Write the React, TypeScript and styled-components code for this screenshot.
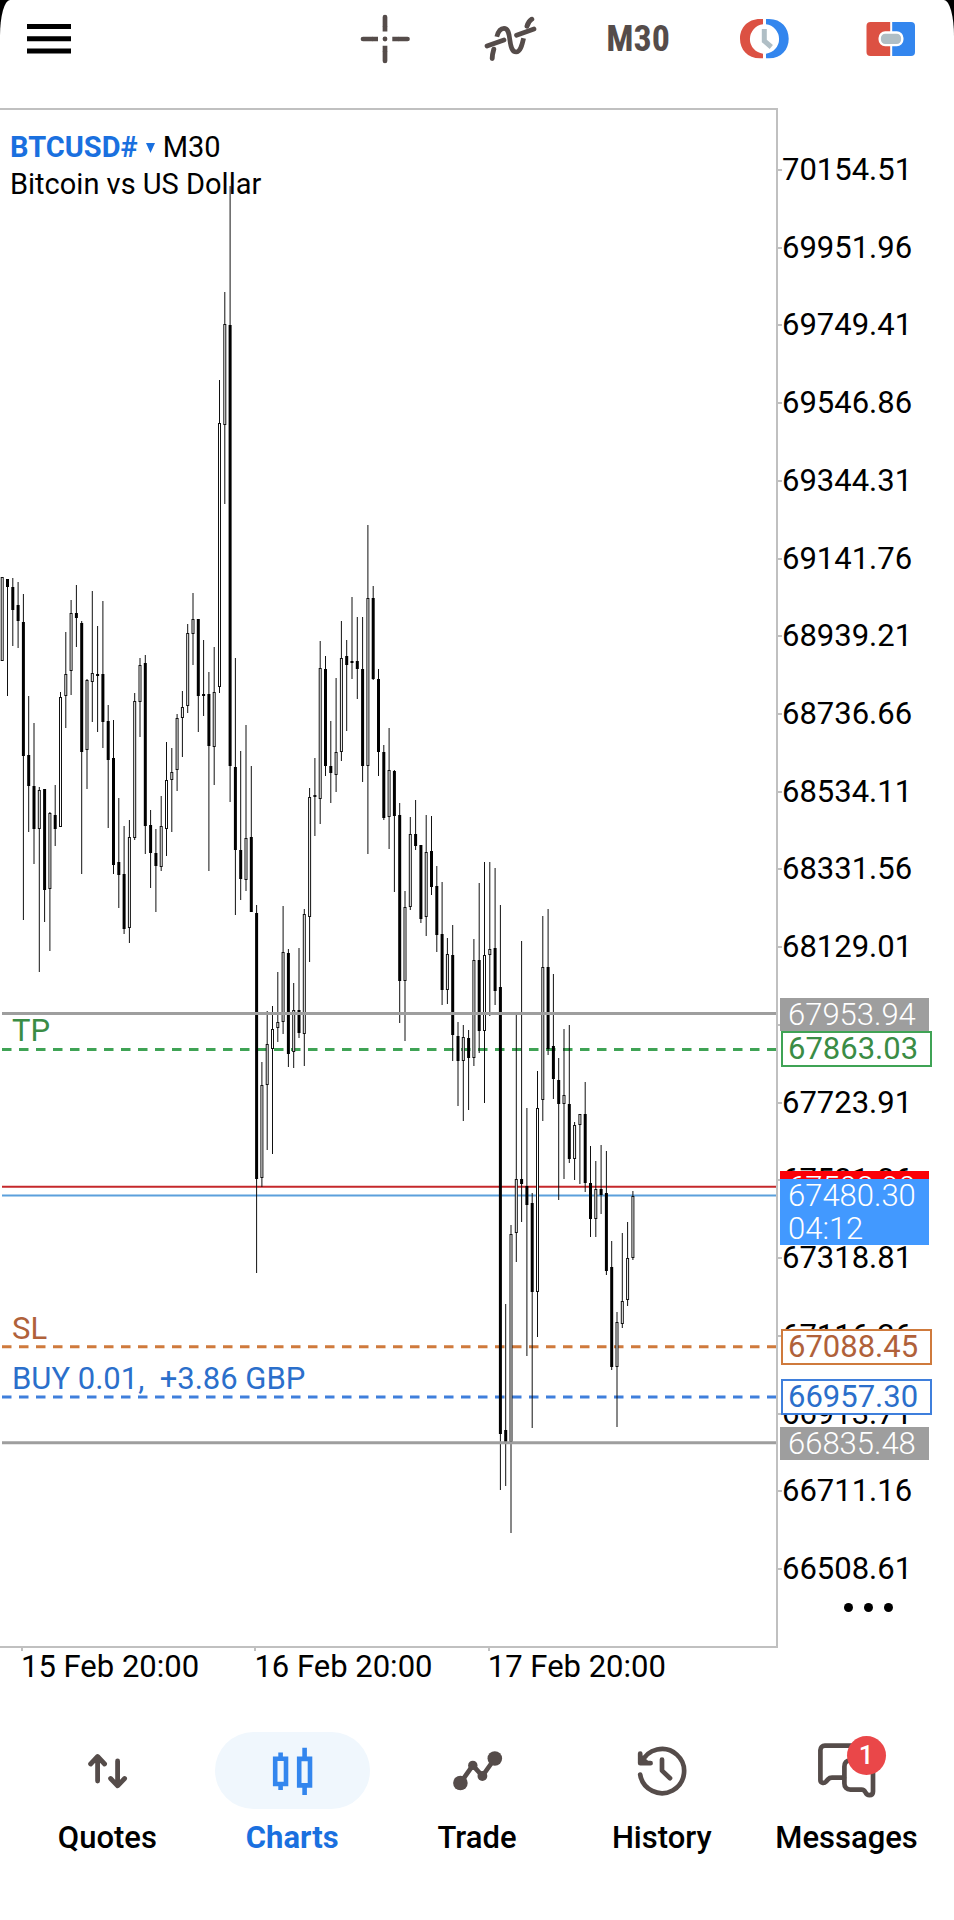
import React from 'react';
import styled, { createGlobalStyle, css } from 'styled-components';

const ink = '#000000';
const iconInk = '#554c4a';
const blue = '#1a70df';
const frame = '#c0c0c0';

/* ---------- price scale ---------- */

const TOP_PRICE = 70154.51;
const PRICE_STEP = 202.55;
const STEP_PX = 77.74;
const FIRST_TICK = 59;
const PLOT_W = 776;
const PLOT_H = 1536;
const TICKS = 19;

const yOf = (price: number) => FIRST_TICK + ((TOP_PRICE - price) / PRICE_STEP) * STEP_PX;
const pctOf = (price: number) => (yOf(price) / PLOT_H) * 100;

const ticks = Array.from({ length: TICKS }, (_, i) => (TOP_PRICE - i * PRICE_STEP).toFixed(2));

/* high, body top, body bottom, low, and whether the candle closed lower */
type Candle = [number, number, number, number, 0 | 1];

const candles: Candle[] = [
  [577, 577, 661, 661, 0], [579, 579, 587, 696, 1], [578, 587, 610, 646, 1], [582, 605, 621, 648, 1],
  [594, 622, 756, 920, 1], [696, 755, 786, 832, 1], [723, 786, 829, 864, 1], [787, 790, 829, 972, 0],
  [789, 789, 890, 922, 1], [812, 813, 889, 951, 0], [785, 815, 829, 846, 1], [692, 697, 827, 827, 0],
  [632, 674, 696, 728, 0], [600, 613, 671, 695, 0], [585, 613, 618, 647, 1], [621, 623, 752, 874, 1],
  [679, 680, 750, 789, 0], [591, 673, 682, 722, 0], [626, 674, 676, 732, 1], [601, 674, 722, 748, 1],
  [705, 721, 760, 828, 1], [720, 758, 865, 874, 1], [798, 862, 875, 908, 1], [826, 874, 929, 934, 1],
  [820, 837, 928, 943, 0], [693, 701, 838, 840, 0], [658, 665, 702, 737, 0], [655, 663, 826, 854, 1],
  [810, 825, 853, 888, 1], [829, 853, 866, 912, 1], [796, 826, 867, 871, 0], [742, 780, 829, 856, 0],
  [748, 772, 780, 832, 0], [714, 718, 770, 791, 0], [691, 707, 718, 757, 0], [624, 633, 706, 713, 0],
  [593, 619, 634, 665, 0], [619, 619, 696, 732, 1], [640, 694, 696, 716, 1], [672, 694, 746, 871, 1],
  [647, 692, 747, 785, 0], [380, 423, 687, 693, 0], [292, 324, 425, 504, 0], [186, 325, 766, 802, 1],
  [658, 767, 850, 915, 1], [751, 850, 879, 900, 1], [725, 838, 880, 891, 0], [766, 837, 912, 912, 1],
  [905, 913, 1179, 1273, 1], [1062, 1085, 1178, 1187, 0], [1011, 1044, 1085, 1150, 0], [1006, 1029, 1049, 1154, 0],
  [972, 1022, 1028, 1042, 0], [906, 952, 1022, 1034, 0], [949, 953, 1054, 1067, 1], [983, 1010, 1052, 1068, 0],
  [948, 1010, 1033, 1038, 1], [909, 914, 1034, 1066, 0], [788, 797, 917, 962, 0], [758, 795, 797, 836, 0],
  [641, 668, 799, 824, 0], [656, 669, 766, 776, 1], [721, 766, 773, 803, 1], [678, 752, 775, 792, 0],
  [621, 658, 752, 761, 0], [640, 656, 665, 731, 1], [597, 661, 663, 679, 1], [617, 661, 669, 699, 1],
  [617, 669, 766, 782, 1], [525, 598, 766, 854, 0], [586, 598, 679, 680, 1], [669, 679, 752, 776, 1],
  [745, 752, 818, 820, 1], [728, 770, 817, 849, 0], [770, 771, 816, 892, 1], [803, 815, 981, 1023, 1],
  [891, 907, 981, 1041, 0], [817, 834, 907, 910, 0], [800, 834, 846, 850, 1], [845, 845, 919, 923, 1],
  [815, 852, 917, 936, 0], [816, 851, 887, 895, 1], [866, 886, 935, 952, 1], [882, 934, 990, 1005, 1],
  [938, 954, 990, 1004, 0], [925, 955, 1035, 1061, 1], [1022, 1036, 1061, 1106, 1], [1025, 1037, 1061, 1121, 0],
  [1030, 1038, 1058, 1110, 1], [939, 960, 1058, 1066, 0], [883, 960, 1031, 1053, 1], [862, 955, 1031, 1103, 0],
  [862, 949, 955, 1016, 0], [868, 948, 991, 1005, 1], [905, 987, 1434, 1490, 1], [1304, 1430, 1442, 1486, 1],
  [1225, 1234, 1442, 1533, 0], [1015, 1179, 1233, 1262, 0], [941, 1179, 1184, 1222, 1], [1108, 1186, 1205, 1356, 1],
  [1193, 1203, 1292, 1428, 1], [1071, 1108, 1292, 1337, 0], [916, 967, 1100, 1121, 0], [909, 967, 1049, 1055, 1],
  [974, 1046, 1079, 1099, 1], [1058, 1080, 1104, 1200, 1], [1029, 1095, 1104, 1179, 0], [1025, 1104, 1159, 1163, 1],
  [1122, 1125, 1159, 1180, 0], [1114, 1114, 1125, 1184, 0], [1082, 1114, 1183, 1192, 1], [1146, 1183, 1219, 1237, 1],
  [1161, 1189, 1219, 1237, 0], [1145, 1189, 1195, 1214, 1], [1151, 1193, 1271, 1275, 1], [1241, 1267, 1367, 1370, 1],
  [1312, 1322, 1367, 1427, 0], [1233, 1301, 1324, 1328, 0], [1222, 1258, 1300, 1306, 0], [1191, 1196, 1258, 1260, 0],
];

const CANDLE_STEP = 5.3;
const CANDLE_START = 2.2;

/* ---------- shell ---------- */

const GlobalStyle = createGlobalStyle`
  *, *::before, *::after { box-sizing: border-box; }
  body { margin: 0; background: #000000; font-family: Roboto, "Liberation Sans", sans-serif; color: ${ink}; }
  button { font: inherit; color: inherit; background: none; border: 0; padding: 0; cursor: pointer; }
  svg { display: block; }
`;

const Screen = styled.main`
  display: flex;
  flex-direction: column;
  min-height: 100vh;
  background: #ffffff;
  border-radius: 10px 10px 0 0 / 36px 36px 0 0;
  overflow: hidden;
`;

const Toolbar = styled.header`
  display: flex;
  justify-content: space-between;
  align-items: flex-start;
  height: 108px;
  padding: 0 1px 0 10px;
`;

const Tools = styled.div`
  display: flex;
`;

const ToolButton = styled.button<{ $narrow?: boolean }>`
  display: flex;
  align-items: center;
  justify-content: center;
  width: ${p => (p.$narrow ? 78 : 126)}px;
  height: 78px;
`;

const Timeframe = styled.span`
  font-family: "Liberation Sans Narrow", "Roboto Condensed", Roboto, sans-serif;
  font-size: 36px;
  line-height: 78px;
  font-weight: 700;
  color: ${iconInk};
`;

/* ---------- chart ---------- */

const Chart = styled.section`
  flex: 1;
  display: flex;
  min-height: 600px;
`;

const Plot = styled.div`
  position: relative;
  flex: 1;
  min-width: 0;
  border: 2px solid ${frame};
  border-left: 0;
`;

const Canvas = styled.svg`
  position: absolute;
  inset: 0;
  width: 100%;
  height: 100%;
`;

const Legend = styled.div`
  position: absolute;
  top: 19px;
  left: 10px;
  font-size: 29px;
  line-height: 37px;
`;

const SymbolRow = styled.div`
  display: flex;
  align-items: center;
  gap: 8px;
`;

const SymbolButton = styled.button`
  display: flex;
  align-items: center;
  gap: 8px;
  font-weight: 700;
  color: ${blue};
`;

const LevelLabel = styled.span<{ $price: number; $color: string }>`
  position: absolute;
  top: ${p => pctOf(p.$price)}%;
  left: 12px;
  margin-top: -35px;
  font-size: 31px;
  line-height: 36px;
  white-space: pre;
  color: ${p => p.$color};
`;

const Axis = styled.aside`
  position: relative;
  display: flex;
  flex-direction: column;
  width: 176px;
  padding: 21px 0 38px;
  border: 2px solid transparent;
  border-width: 2px 0;
`;

const TickLabel = styled.span`
  flex: 1;
  display: flex;
  align-items: center;
  font-size: 31px;
  line-height: 36px;

  &::before {
    content: '';
    width: 4px;
    height: 2px;
    background: ${frame};
  }
`;

const PriceTag = styled.span<{ $price: number; $color: string; $outlined?: boolean; $text?: string }>`
  position: absolute;
  top: ${p => pctOf(p.$price)}%;
  left: 2px;
  width: 149px;
  margin-top: -16px;
  padding-left: 8px;
  font-size: 31px;
  line-height: 33px;
  font-weight: 300;
  color: #ffffff;
  background: ${p => p.$color};

  ${p => p.$outlined && css`
    left: 3px;
    width: 151px;
    margin-top: -17px;
    padding-left: 5px;
    line-height: 32px;
    font-weight: 400;
    color: ${p.$text};
    background: #ffffff;
    border: 2px solid ${p.$color};
  `}
`;

const TagLine = styled.span`
  display: block;
`;

const MoreButton = styled.button`
  position: absolute;
  right: 51px;
  bottom: 24px;
  display: flex;
  gap: 11px;
  padding: 10px;
`;

const Dot = styled.span`
  width: 9px;
  height: 9px;
  border-radius: 50%;
  background: ${ink};
`;

const TimeAxis = styled.div`
  display: grid;
  grid-template-columns: repeat(3, 30%);
  height: 84px;
  margin-right: 176px;
  font-size: 31px;
  line-height: 37px;
`;

const TimeTick = styled.time`
  padding-left: 21px;
  white-space: nowrap;

  &::before {
    content: '';
    display: block;
    width: 2px;
    height: 3px;
    margin-bottom: -3px;
    background: ${frame};
  }
`;

/* ---------- bottom navigation ---------- */

const Nav = styled.nav`
  display: grid;
  grid-template-columns: repeat(5, 1fr);
  padding: 0 15px 64px;
`;

const NavItem = styled.a<{ $active?: boolean }>`
  display: flex;
  flex-direction: column;
  align-items: center;
  gap: 11px;
  font-size: 31px;
  line-height: 36px;
  font-weight: ${p => (p.$active ? 700 : 500)};
  color: ${p => (p.$active ? blue : ink)};
  text-decoration: none;
`;

const NavPill = styled.span<{ $active?: boolean }>`
  display: flex;
  justify-content: center;
  width: 155px;
  max-width: 100%;
  height: 77px;
  border-radius: 39px;
  background: ${p => (p.$active ? '#f0f7fd' : 'transparent')};
`;

const IconBox = styled.span`
  position: relative;
`;

const Badge = styled.span`
  position: absolute;
  top: 4px;
  left: 39px;
  width: 39px;
  height: 39px;
  border-radius: 50%;
  background: #ea4749;
  color: #ffffff;
  font-size: 26px;
  line-height: 39px;
  font-weight: 500;
  text-align: center;
`;

/* ---------- icons ---------- */

const Icon = ({ children }: { children: React.ReactNode }) => (
  <svg width="78" height="78" viewBox="0 0 78 78" fill="none" stroke={iconInk} strokeWidth="4.7"
    strokeLinecap="round" strokeLinejoin="round" aria-hidden="true">
    {children}
  </svg>
);

const MenuIcon = () => (
  <Icon>
    <path d="M17 26.5h44M17 38.8h44M17 51h44" stroke={ink} strokeWidth="5" strokeLinecap="butt" />
  </Icon>
);

const CrosshairIcon = () => (
  <Icon>
    <path d="M38 17v9M38 61v-9M16 39h9M60.5 39h-9" />
    <path d="M38 26v5.6M38 52v-6.3M25 39h6M51.5 39h-6.2" strokeLinecap="butt" />
    <circle cx="38" cy="39" r="2.4" fill={iconInk} stroke="none" />
  </Icon>
);

const IndicatorsIcon = () => (
  <Icon>
    <path d="M14 46L31 40M43.5 35.3L61 29" />
    <path d="M19.2 58.6C19.2 55 20 52 20.8 49.2M54 26.2C55 23 56.5 20.5 58.8 19.2" strokeWidth="4.9" />
    <path d="M23.8 36.8C25 32 27.5 28.4 31 28.4C35 28.4 36 33 36.8 39.5C37.8 47 39 52 43.2 52C47.5 52 49 45 50.6 38.2" strokeLinecap="butt" />
  </Icon>
);

const ClockIcon = () => (
  <Icon>
    <path d="M38 19H35C22.5 19 15 28 15 38.7S22.5 58.3 35 58.3H38V53.7A14.8 14.8 0 0 1 38 24.3Z" fill="#dc5143" stroke="none" />
    <path d="M41 19H44C56.5 19 63.7 28 63.7 38.7S56.5 58.3 44 58.3H41V53.7A14.8 14.8 0 0 0 41 24.3Z" fill="#3386ee" stroke="none" />
    <path d="M39.3 29V41L46.3 47" stroke="#b0bec5" strokeWidth="5" strokeLinecap="butt" strokeLinejoin="miter" />
  </Icon>
);

const OneClickIcon = () => (
  <Icon>
    <path d="M39.2 22H19.5A4 4 0 0 0 15.5 26V52A4 4 0 0 0 19.5 56H39.2Z" fill="#dc5143" stroke="none" />
    <path d="M41.2 22H60A4 4 0 0 1 64 26V52A4 4 0 0 1 60 56H41.2Z" fill="#3386ee" stroke="none" />
    <rect x="28.7" y="32.5" width="22.6" height="12.6" rx="5.5" fill="#b0bec5" stroke="#ffffff" strokeWidth="2.4" />
  </Icon>
);

const QuotesIcon = () => (
  <Icon>
    <path d="M29.6 25.5V49M22.6 32L29.6 24.5L36.6 32M49.6 29V52M42.6 46.5L49.6 53.8L56.6 46.5" strokeWidth="4.8" />
  </Icon>
);

const ChartsIcon = () => (
  <Icon>
    <path d="M22.2 26.7H33V52H22.2ZM27.6 20.5V26M27.6 53V58M46.2 26.9H57V53.4H46.2ZM51.6 15.7V26M51.6 54V63"
      stroke="#3386ee" strokeLinecap="butt" strokeLinejoin="miter" strokeWidth="4.6" />
  </Icon>
);

const TradeIcon = () => (
  <Icon>
    <path d="M22.4 51L34.8 33.4L44.4 44L56.8 26.5" />
    <g fill={iconInk} stroke="none">
      <circle cx="22.4" cy="51" r="7.3" />
      <circle cx="56.8" cy="26.5" r="7.3" />
      <circle cx="34.8" cy="33.4" r="4.7" />
      <circle cx="44.4" cy="44" r="4.9" />
    </g>
  </Icon>
);

const HistoryIcon = () => (
  <Icon>
    <path d="M17.2 42.6A22.1 22.1 0 1 0 18.6 30.6" />
    <path d="M17.2 21.6V31.2H27.6Z" fill={iconInk} stroke="none" />
    <path d="M17.2 21.6V31.2H27.6M39 27.6V38.6L47 46.2" />
  </Icon>
);

const MessagesIcon = () => (
  <Icon>
    <path d="M44 13.7H16.8A4.4 4.4 0 0 0 12.4 18.1V48C12.4 50.8 15.8 51.8 18 49.6L20 47.4C21.2 46.1 22.4 45.7 24 45.7H36" />
    <path d="M42 28.5C38.4 28.5 36.4 31 36.4 34.4V51.6C36.4 55.2 38.6 57.6 42.4 57.6H53.5C55.6 57.6 56.6 58.6 57.4 60.2C58.4 62.2 59.2 63.2 61.4 63.2C63.8 63.2 65 61.8 65 59.4V36" />
  </Icon>
);

/* ---------- data-driven parts ---------- */

const quotes = [
  { price: 67502.9, color: '#c5282b' },
  { price: 67480.3, color: '#5ba0dc' },
];

const orders = [
  { price: 67863.03, color: '#3fa355', text: '#3a8c45', label: 'TP' },
  { price: 67088.45, color: '#cf7a3c', text: '#b0613a', label: 'SL' },
  { price: 66957.3, color: '#3f7fdc', text: '#2b6fcb', label: 'BUY 0.01,  +3.86 GBP' },
];

const supports = [67953.94, 66835.48];

const navItems = [
  { label: 'Quotes', icon: <QuotesIcon /> },
  { label: 'Charts', icon: <ChartsIcon />, active: true },
  { label: 'Trade', icon: <TradeIcon /> },
  { label: 'History', icon: <HistoryIcon /> },
  { label: 'Messages', icon: <MessagesIcon />, badge: 1 },
];

const Candles = () => (
  <g transform="translate(0 -110)">
    {candles.map(([high, top, bottom, low, down], i) => {
      const x = CANDLE_START + i * CANDLE_STEP;
      return (
        <g key={i}>
          <path d={`M${x} ${high}V${top}M${x} ${bottom}V${low}`} stroke="#111111" strokeWidth="1" />
          {down ? (
            <rect x={x - 1.5} y={top} width="3" height={Math.max(bottom - top, 1)} fill="#000000" />
          ) : (
            <rect x={x - 1} y={top + 0.5} width="2" height={Math.max(bottom - top - 1, 1)}
              fill="#ffffff" stroke="#111111" strokeWidth="1" />
          )}
        </g>
      );
    })}
  </g>
);

export default function App() {
  return (
    <>
      <GlobalStyle />
      <Screen>
        <Toolbar>
          <ToolButton $narrow aria-label="Menu"><MenuIcon /></ToolButton>
          <Tools>
            <ToolButton aria-label="Crosshair"><CrosshairIcon /></ToolButton>
            <ToolButton aria-label="Indicators"><IndicatorsIcon /></ToolButton>
            <ToolButton><Timeframe>M30</Timeframe></ToolButton>
            <ToolButton aria-label="Trading sessions"><ClockIcon /></ToolButton>
            <ToolButton aria-label="One click trading"><OneClickIcon /></ToolButton>
          </Tools>
        </Toolbar>

        <Chart>
          <Plot>
            <Canvas viewBox={`0 0 ${PLOT_W} ${PLOT_H}`} preserveAspectRatio="none" aria-hidden="true">
              {quotes.map(q => (
                <path key={q.price} d={`M2 ${yOf(q.price)}H${PLOT_W}`} stroke={q.color} strokeWidth="2" />
              ))}
              {orders.map(o => (
                <path key={o.price} d={`M2 ${yOf(o.price) + 1}H${PLOT_W}`} stroke={o.color}
                  strokeWidth="3" strokeDasharray="9.5 7.5" />
              ))}
              <Candles />
              {supports.map(price => (
                <path key={price} d={`M2 ${yOf(price)}H${PLOT_W}`} stroke="#9e9e9e" strokeWidth="3" />
              ))}
            </Canvas>
            <Legend>
              <SymbolRow>
                <SymbolButton>
                  BTCUSD#
                  <svg width="9" height="10" viewBox="0 0 9 10" aria-hidden="true">
                    <path d="M0 0H9L4.5 10Z" fill={blue} />
                  </svg>
                </SymbolButton>
                <span>M30</span>
              </SymbolRow>
              <div>Bitcoin vs US Dollar</div>
            </Legend>
            {orders.map(o => (
              <LevelLabel key={o.label} $price={o.price} $color={o.text}>{o.label}</LevelLabel>
            ))}
          </Plot>

          <Axis>
            {ticks.map(t => <TickLabel key={t}>{t}</TickLabel>)}
            <PriceTag $price={67953.94} $color="#9e9e9e">67953.94</PriceTag>
            <PriceTag $price={67502.9} $color="#fb0007">67502.90</PriceTag>
            <PriceTag $price={67480.3} $color="#4299ff">
              <TagLine>67480.30</TagLine>
              <TagLine>04:12</TagLine>
            </PriceTag>
            {orders.map(o => (
              <PriceTag key={o.label} $price={o.price} $color={o.color} $text={o.text} $outlined>
                {o.price.toFixed(2)}
              </PriceTag>
            ))}
            <PriceTag $price={66835.48} $color="#9e9e9e">66835.48</PriceTag>
            <MoreButton aria-label="More"><Dot /><Dot /><Dot /></MoreButton>
          </Axis>
        </Chart>

        <TimeAxis>
          <TimeTick>15 Feb 20:00</TimeTick>
          <TimeTick>16 Feb 20:00</TimeTick>
          <TimeTick>17 Feb 20:00</TimeTick>
        </TimeAxis>

        <Nav>
          {navItems.map(n => (
            <NavItem key={n.label} href={`#${n.label.toLowerCase()}`} $active={n.active}>
              <NavPill $active={n.active}>
                <IconBox>
                  {n.icon}
                  {n.badge && <Badge>{n.badge}</Badge>}
                </IconBox>
              </NavPill>
              {n.label}
            </NavItem>
          ))}
        </Nav>
      </Screen>
    </>
  );
}
